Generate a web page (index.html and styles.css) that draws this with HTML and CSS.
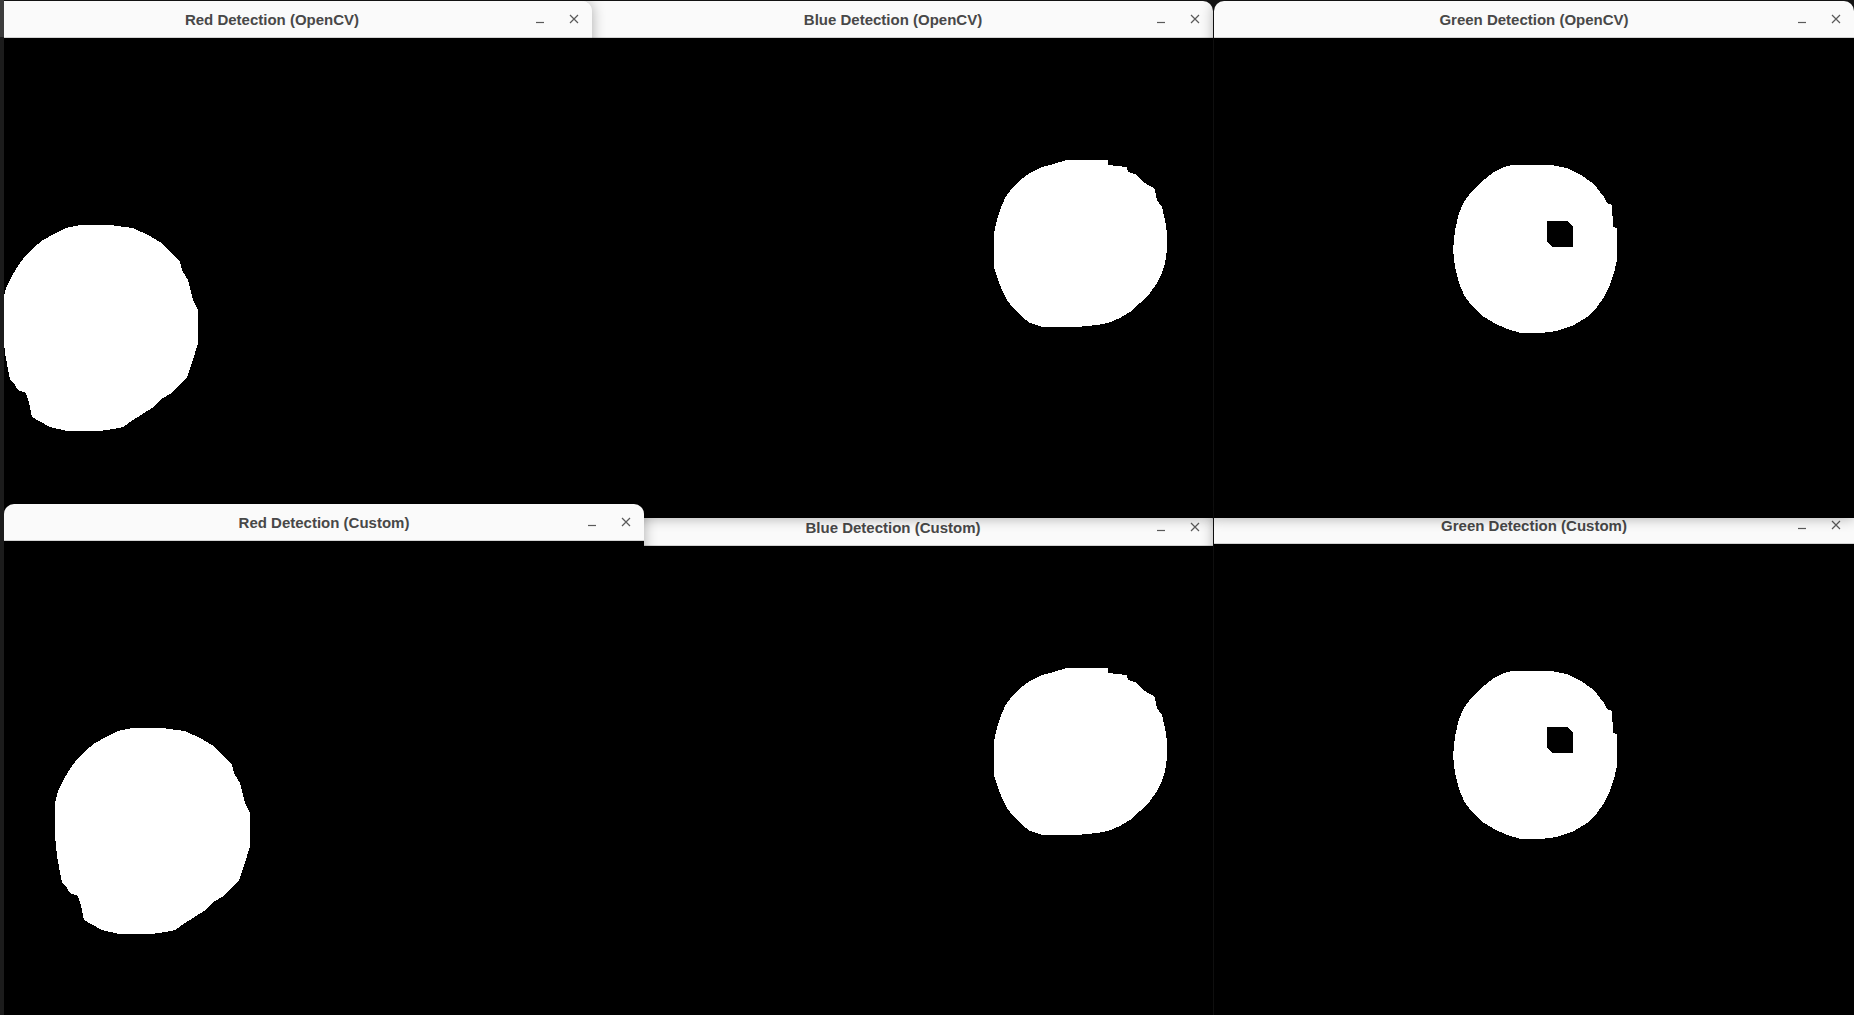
FILE: index.html
```html
<!DOCTYPE html>
<html lang="en">
<head>
<meta charset="utf-8">
<title>Color Detection</title>
<link rel="stylesheet" href="styles.css">
</head>
<body>
<svg class="defs" width="0" height="0" aria-hidden="true">
  <defs>
    <path id="red-blob" d="M128 187 L158 187 L181 190 L196 197 L208 204 L220 215 L228 224 L230 232 L236 242 L241 262 L246 272 L246 305 L241 322 L235 339 L221 354 L208 362 L200 370 L181 382 L171 389 L161 391 L148 393 L115 393 L98 389 L80 379 L77 365 L74 355 L66 352 L61 344 L58 342 L53 315 L51 295 L51 262 L54 250 L60 238 L66 228 L73 218 L81 210 L91 202 L102 196 L114 190 Z"/>
    <path id="blue-blob" d="M494 122 L535 122 L535 127 L554 129 L555 134 L564 137 L570 144 L579 149 L582 152 L584 162 L589 169 L592 182 L594 195 L594 212 L592 225 L589 235 L584 245 L577 255 L567 265 L557 274 L547 280 L535 285 L524 287 L504 289 L469 289 L457 285 L449 279 L440 270 L434 262 L429 252 L424 239 L421 229 L421 195 L424 182 L427 172 L432 160 L439 150 L447 142 L457 135 L469 129 L477 127 Z"/>
    <path id="green-blob" fill-rule="evenodd" d="M298 127 L337 127 L353 130 L367 137 L377 144 L383 150 L390 159 L393 165 L398 167 L399 189 L403 190 L403 222 L400 235 L395 249 L390 259 L383 269 L373 279 L360 287 L343 293 L327 295 L307 295 L293 291 L280 285 L267 277 L257 267 L250 257 L245 245 L241 229 L239 212 L241 192 L245 175 L250 164 L257 154 L267 144 L280 134 L290 129 Z M333 183 L353 183 L359 189 L359 209 L339 209 L333 204 Z"/>
  </defs>
</svg>

<div class="dock-edge">
  <div class="dock-edge-top"></div>
  <div class="dock-edge-rest"></div>
</div>

<div class="desktop">

  <div class="window win-blue-custom">
    <div class="titlebar">
      <span class="title">Blue Detection (Custom)</span>
      <span class="controls">
        <span class="btn"><svg width="16" height="16" viewBox="0 0 16 16"><path d="M4 11.5h8" class="glyph"/></svg></span>
        <span class="btn"><svg width="16" height="16" viewBox="0 0 16 16"><path d="M4 4l8 8M12 4l-8 8" class="glyph"/></svg></span>
      </span>
    </div>
    <div class="content"><svg width="640" height="480" viewBox="0 0 640 480"><use href="#blue-blob" class="blob"/></svg></div>
  </div>

  <div class="window win-green-custom">
    <div class="titlebar">
      <span class="title">Green Detection (Custom)</span>
      <span class="controls">
        <span class="btn"><svg width="16" height="16" viewBox="0 0 16 16"><path d="M4 11.5h8" class="glyph"/></svg></span>
        <span class="btn"><svg width="16" height="16" viewBox="0 0 16 16"><path d="M4 4l8 8M12 4l-8 8" class="glyph"/></svg></span>
      </span>
    </div>
    <div class="content"><svg width="640" height="480" viewBox="0 0 640 480"><use href="#green-blob" class="blob"/></svg></div>
  </div>

  <div class="window win-blue-cv">
    <div class="titlebar">
      <span class="title">Blue Detection (OpenCV)</span>
      <span class="controls">
        <span class="btn"><svg width="16" height="16" viewBox="0 0 16 16"><path d="M4 11.5h8" class="glyph"/></svg></span>
        <span class="btn"><svg width="16" height="16" viewBox="0 0 16 16"><path d="M4 4l8 8M12 4l-8 8" class="glyph"/></svg></span>
      </span>
    </div>
    <div class="content"><svg width="640" height="480" viewBox="0 0 640 480"><use href="#blue-blob" class="blob"/></svg></div>
  </div>

  <div class="window win-green-cv">
    <div class="titlebar">
      <span class="title">Green Detection (OpenCV)</span>
      <span class="controls">
        <span class="btn"><svg width="16" height="16" viewBox="0 0 16 16"><path d="M4 11.5h8" class="glyph"/></svg></span>
        <span class="btn"><svg width="16" height="16" viewBox="0 0 16 16"><path d="M4 4l8 8M12 4l-8 8" class="glyph"/></svg></span>
      </span>
    </div>
    <div class="content"><svg width="640" height="480" viewBox="0 0 640 480"><use href="#green-blob" class="blob"/></svg></div>
  </div>

  <div class="window win-red-cv">
    <div class="titlebar">
      <span class="title">Red Detection (OpenCV)</span>
      <span class="controls">
        <span class="btn"><svg width="16" height="16" viewBox="0 0 16 16"><path d="M4 11.5h8" class="glyph"/></svg></span>
        <span class="btn"><svg width="16" height="16" viewBox="0 0 16 16"><path d="M4 4l8 8M12 4l-8 8" class="glyph"/></svg></span>
      </span>
    </div>
    <div class="content"><svg width="640" height="480" viewBox="0 0 640 480"><use href="#red-blob" class="blob"/></svg></div>
  </div>

  <div class="window win-red-custom">
    <div class="titlebar">
      <span class="title">Red Detection (Custom)</span>
      <span class="controls">
        <span class="btn"><svg width="16" height="16" viewBox="0 0 16 16"><path d="M4 11.5h8" class="glyph"/></svg></span>
        <span class="btn"><svg width="16" height="16" viewBox="0 0 16 16"><path d="M4 4l8 8M12 4l-8 8" class="glyph"/></svg></span>
      </span>
    </div>
    <div class="content"><svg width="640" height="480" viewBox="0 0 640 480"><use href="#red-blob" class="blob"/></svg></div>
  </div>

</div>
</body>
</html>
```

FILE: styles.css
```css
html, body {
  margin: 0;
  padding: 0;
}

body {
  width: 1854px;
  height: 1015px;
  overflow: hidden;
  display: flex;
  background: #141414;
  font-family: "Liberation Sans", Arial, sans-serif;
}

.defs {
  position: absolute;
  width: 0;
  height: 0;
  overflow: hidden;
}

.dock-edge {
  width: 4px;
  flex: none;
  display: flex;
  flex-direction: column;
  position: relative;
  z-index: 10;
}

.dock-edge-top {
  height: 37px;
  background: #3c3c3c;
}

.dock-edge-rest {
  flex: 1;
  background: #1c1c1c;
}

.desktop {
  position: relative;
  flex: 1;
  overflow: hidden;
  background: #161616;
}

.window {
  position: absolute;
  width: 640px;
  display: flex;
  flex-direction: column;
  border-radius: 10px 10px 0 0;
  box-shadow: 0 0 14px rgba(0, 0, 0, 0.32);
}

.titlebar {
  height: 36px;
  border-bottom: 1px solid #d3d3d3;
  background: #fafafa;
  border-radius: 10px 10px 0 0;
  display: grid;
  grid-template-columns: 1fr auto 1fr;
  align-items: center;
}

.title {
  grid-column: 2;
  font-weight: bold;
  font-size: 15px;
  color: #484848;
  white-space: nowrap;
}

.controls {
  grid-column: 3;
  justify-self: end;
  display: flex;
  gap: 18px;
  padding-right: 10px;
}

.btn {
  width: 16px;
  height: 16px;
  display: flex;
  align-items: center;
  justify-content: center;
}

.btn svg {
  display: block;
}

.glyph {
  fill: none;
  stroke: #5a5a5a;
  stroke-width: 1.2;
}

.content {
  height: 480px;
  background: #000;
}

.content svg {
  display: block;
}

.blob {
  fill: #fff;
  shape-rendering: crispEdges;
}

.win-blue-custom {
  left: 569px;
  top: 509px;
  z-index: 1;
}

.win-green-custom {
  left: 1210px;
  top: 507px;
  z-index: 2;
}

.win-blue-cv {
  left: 569px;
  top: 1px;
  z-index: 3;
}

.win-green-cv {
  left: 1210px;
  top: 1px;
  z-index: 4;
}

.win-red-cv {
  left: -52px;
  top: 1px;
  z-index: 5;
}

.win-red-custom {
  left: 0;
  top: 504px;
  z-index: 6;
}
```
